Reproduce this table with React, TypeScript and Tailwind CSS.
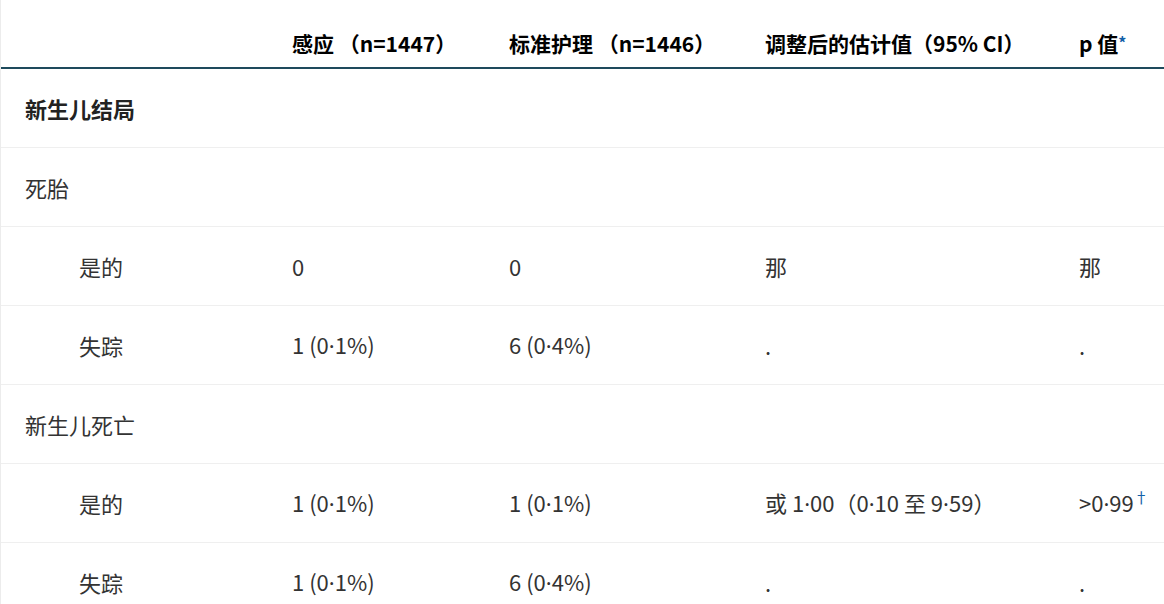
const cols = "grid grid-cols-[267px_217px_256px_314px_109px]";

// the CJK font draws "·" full width, so the middle dot gets a Latin face
const Num = ({ text }: { text: string }) => {
    const parts = text.split("·");
    return (
        <>
            {parts.map((p, i) => (
                <span key={i}>
                    {i > 0 && <span style={{ fontFamily: '"Noto Sans", sans-serif' }}>·</span>}
                    {p}
                </span>
            ))}
        </>
    );
};

type Row = {
    label: string;
    indent?: boolean;
    bold?: boolean;
    cells?: React.ReactNode[];
};

const rows: Row[] = [
    { label: "新生儿结局", bold: true },
    { label: "死胎" },
    { label: "是的", indent: true, cells: ["0", "0", "那", "那"] },
    { label: "失踪", indent: true, cells: [<Num text="1 (0·1%)" />, <Num text="6 (0·4%)" />, ".", "."] },
    { label: "新生儿死亡" },
    {
        label: "是的",
        indent: true,
        cells: [
            <Num text="1 (0·1%)" />,
            <Num text="1 (0·1%)" />,
            <Num text="或 1·00（0·10 至 9·59）" />,
            <span>
                <Num text=">0·99" />
                <sup className="relative -top-[9px] text-[15px] text-[#1460a8]">†</sup>
            </span>,
        ],
    },
    { label: "失踪", indent: true, cells: [<Num text="1 (0·1%)" />, <Num text="6 (0·4%)" />, ".", "."] },
];

export default function App() {
    return (
        <div
            className="w-[1164px] h-[604px] overflow-hidden bg-white border-l border-[#ececec]"
            style={{ fontFamily: '"Noto Sans CJK SC", "Noto Sans", sans-serif' }}
        >
            {/* header */}
            <div className={`${cols} h-[69px] pt-[20px] items-center border-b-2 border-[#1e4a5c] text-[21px] font-bold text-black`}>
                <div className="pl-6"></div>
                <div className="pl-6 whitespace-nowrap">感应 （n=1447）</div>
                <div className="pl-6 whitespace-nowrap">标准护理 （n=1446）</div>
                <div className="pl-6 whitespace-nowrap">调整后的估计值（95% CI）</div>
                <div className="pl-6 whitespace-nowrap">
                    p 值<sup className="relative -top-[3px] text-[16px] text-[#1460a8]">*</sup>
                </div>
            </div>

            {/* body */}
            {rows.map((row, i) => (
                <div
                    key={i}
                    className={`${cols} h-[79px] items-center border-b border-[#efefef] text-[22px] text-[#333]`}
                >
                    <div className={`${row.indent ? "pl-[78px]" : "pl-6"} ${row.bold ? "font-bold text-[#222]" : ""}`}>
                        {row.label}
                    </div>
                    {(row.cells ?? ["", "", "", ""]).map((c, j) => (
                        <div key={j} className="pl-6 whitespace-nowrap">
                            {c}
                        </div>
                    ))}
                </div>
            ))}
        </div>
    );
}
